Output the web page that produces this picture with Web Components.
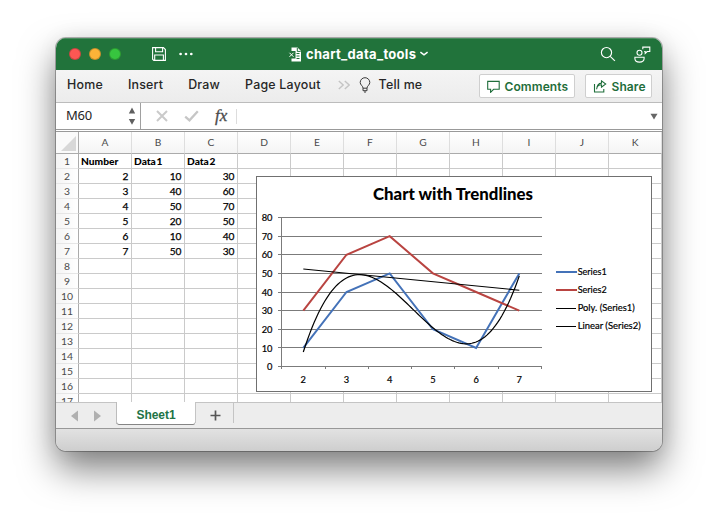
<!DOCTYPE html>
<html lang="en">
<head>
<meta charset="utf-8">
<title>chart_data_tools</title>
<style>
html,body{margin:0;width:718px;height:525px;overflow:hidden;background:#fff}
body{padding:38px 56px;box-sizing:border-box;font-family:Inter,"Liberation Sans",sans-serif}
</style>
</head>
<body>
<app-window>
  <title-bar name="chart_data_tools"></title-bar>
  <ribbon-bar></ribbon-bar>
  <formula-bar cell="M60"></formula-bar>
  <sheet-grid><trend-chart></trend-chart></sheet-grid>
  <sheet-tabs><span>Sheet1</span></sheet-tabs>
  <status-bar></status-bar>
</app-window>
<script>
const define = (name, html, setup) => customElements.define(name, class extends HTMLElement {
  constructor() {
    super();
    this.attachShadow({mode: 'open'}).innerHTML = html;
  }
  connectedCallback() { if (setup) setup(this, this.shadowRoot); }
});

define('app-window', `<style>
:host{display:flex;flex-direction:column;width:606px;height:413px;border-radius:10px;
 box-shadow:0 0 0 1px rgba(0,0,0,.27),0 18px 36px rgba(0,0,0,.5),0 0 22px rgba(0,0,0,.06)}
.in{display:flex;flex-direction:column;height:100%;border-radius:10px;overflow:hidden}
</style><div class="in"><slot></slot></div>`);

define('title-bar', `<style>
:host{display:flex;height:32px;background:#21733b;box-shadow:inset 0 1px #4b8d60;color:#fff;align-items:center;flex:none}
.lights{display:flex;gap:8px;padding-left:13px}
.lights i{width:12px;height:12px;border-radius:50%;box-sizing:border-box;border:1px solid #0003}
.tools{display:flex;gap:12px;padding-left:30px;align-items:center;width:137px}
.name{display:flex;align-items:center;font-weight:700;font-size:13px;letter-spacing:.3px}
.name svg:first-child{margin-right:4px}.name svg:last-child{margin-left:3px}
.right{display:flex;margin-left:auto;gap:18px;padding-right:11px;align-items:center}
svg{fill:none;stroke:#fff;display:block}
</style>
<div class="lights"><i style="background:#fc5753"></i><i style="background:#fdb338"></i><i style="background:#37c53f"></i></div>
<div class="tools">
<svg width="16" height="16" viewBox="0 0 16 16" stroke-width="1.1"><path d="M1.6 1.6h10.8l2 2v10.8H2.8l-1.2-1.2zM4.6 1.8v4h7v-4M3.7 14.3V9h8.7v5.3"/></svg>
<svg width="14" height="4" viewBox="0 0 14 4"><g fill="#fff" stroke="none"><circle cx="1.6" cy="2" r="1.35"/><circle cx="7" cy="2" r="1.35"/><circle cx="12.3" cy="2" r="1.35"/></g></svg>
</div>
<div class="name">
<svg width="14" height="15" viewBox="0 0 14 15"><path d="M3.5.5h6L13 4v10.5H3.5z" fill="#fff" stroke="none"/><path d="M9.3 1v3.4h3.4M8.5 6.5h3M8.5 9h3M8.5 11.5h3" stroke="#21733b" stroke-width="1"/><path d="M0 4h7.5v7.5H0z" fill="#21733b" stroke="none"/><path d="m1.5 5.8 4 4m0-4-4 4"/></svg>
<span></span>
<svg width="10" height="8" viewBox="0 0 10 8" stroke-width="1.5"><path d="M1.4 2.2 5 4.9l3.6-2.7"/></svg>
</div>
<div class="right">
<svg width="16" height="16" viewBox="0 0 16 16" stroke-width="1.15"><circle cx="6.5" cy="6.6" r="5.1"/><path d="m10.2 10.3 4.7 4.5"/></svg>
<svg width="17" height="17" viewBox="0 0 17 17" stroke-width="1.1"><circle cx="5.5" cy="6.8" r="2.5"/><path d="M.9 11.3h9.2v1.2q0 3.6-4.6 3.6T.9 12.5zM8.8 3.2V1.1h7v4.4h-2.6l-2 2V5.5h-1"/></svg>
</div>`, (el, r) => r.querySelector('.name span').textContent = el.getAttribute('name'));

define('ribbon-bar', `<style>
:host{display:flex;height:33px;box-sizing:border-box;flex:none;background:linear-gradient(#f4f4f4,#ececec);border-bottom:1px solid #bcbcbc;color:#262626;font-size:12.4px;font-weight:500;letter-spacing:.22px;align-items:flex-start;padding:7px 10.5px 0 11px}
nav{display:flex;gap:25px;line-height:16px;flex:none}
.more{padding:3px 9px 0 17px}.bulb{padding-right:8px}
svg{display:block;fill:none}
.tell{line-height:16px}
.btns{display:flex;margin-left:auto;gap:10px;margin-top:-3px}
button{font:600 12px Inter,sans-serif;letter-spacing:.1px;color:#1f6e3b;background:#fff;border:1px solid #cfcfcf;border-radius:2px;height:24px;display:flex;align-items:center;padding:0 6px 0 7px;gap:5px;width:96px;white-space:nowrap;margin:0;box-sizing:border-box}
button+button{width:67px}
button svg{flex:none}
</style><nav><span>Home</span><span>Insert</span><span>Draw</span><span>Page Layout</span></nav>
<div class="more"><svg width="12" height="10" viewBox="0 0 12 10" stroke="#c4c4c4" stroke-width="1.4"><path d="m.8 1 4.4 4L.8 9M6.8 1l4.4 4-4.4 4"/></svg></div>
<div class="bulb"><svg width="12" height="16" viewBox="0 0 12 16" stroke="#3a3a3a" stroke-width="1"><path d="M4 11.2Q4 9.7 2.5 8.3A4.7 4.7 0 0 1 1.2 5.5a4.8 4.8 0 0 1 9.6 0 4.7 4.7 0 0 1-1.3 2.8Q8 9.7 8 11.2zM4 11.2v2.5h4v-2.5M5 15h2"/></svg></div>
<span class="tell">Tell me</span>
<div class="btns"><button><svg width="13" height="13" viewBox="0 0 13 13" stroke="#1f6e3b" stroke-width="1.1"><path d="M.7 1.4h11.5v7.9H6.6l-3 3v-3H.7z"/></svg>Comments</button>
<button><svg width="14" height="13" viewBox="0 0 14 13" stroke="#1f6e3b" stroke-width="1.1"><path d="M1.5 4v8h9.3V9M3.6 9.3Q4 5 8.5 4.8V7.2L12.7 4 8.5 .9v2.2Q4 3.5 3.6 9.3z"/></svg>Share</button></div>`);

define('formula-bar', `<style>
:host{display:flex;height:29px;box-sizing:border-box;flex:none;background:#fff;border-bottom:1px solid #999;align-items:stretch}
.frame{display:flex;width:100%;border-bottom:1px solid #999;margin-bottom:1px;align-items:center}
.cell{width:85px;flex:none;height:26px;border-right:1px solid #a0a0a0;padding:0 4px 0 10px;box-sizing:border-box;display:flex;align-items:center;justify-content:space-between;color:#252525;font:13px "Noto Sans",sans-serif;letter-spacing:-.2px}
.cell span{margin-top:-2px}
svg{display:block}.x{margin-left:15px}.v{margin-left:16px}
.fx{font:italic 17px "Liberation Serif",serif;color:#4b4b4b;margin-left:16px;letter-spacing:0;width:20px;line-height:22px;-webkit-text-stroke:.3px #4b4b4b}
.line{width:1px;height:15px;background:#ddd;margin-left:1px}.end{margin-left:auto;padding-right:4px}
</style><div class="frame"><div class="cell"><span></span><svg width="8" height="18" viewBox="0 0 8 18" fill="#606060"><path d="M4 .5 7.2 6.4H.8zM4 17.7.8 12h6.4z"/></svg></div>
<svg class="x" width="12" height="12" viewBox="0 0 12 12" stroke="#cacaca" stroke-width="2"><path d="m1 1 10 10M11 1 1 11"/></svg>
<svg class="v" width="15" height="12" viewBox="0 0 15 12" fill="none" stroke="#c6c6c6" stroke-width="2.3"><path d="m1.2 6.6 4.3 3.7L13.8 1.3"/></svg>
<span class="fx">fx</span><div class="line"></div><svg class="end" width="8" height="7" viewBox="0 0 8 7" fill="#666"><path d="M.5.7h7L4 6.4z"/></svg></div>`,
 (el, r) => r.querySelector('.cell span').textContent = el.getAttribute('cell'));

define('sheet-grid', `<style>
:host{display:block;position:relative;height:270px;flex:none;overflow:hidden;background:#fff;font:10.2px Lato,sans-serif}
.grid{display:grid;grid-template-columns:23px repeat(11,53px);grid-template-rows:22px repeat(17,15px)}
.grid div{box-sizing:border-box;border-right:1px solid #cacaca;border-bottom:1px solid #cacaca;text-align:right;padding-right:2.5px;line-height:14px;white-space:nowrap;color:#000;-webkit-text-stroke:.25px #000}
.grid .col,.grid .row,.grid .corner{-webkit-text-stroke:0;color:#4a4a4a;text-align:center;padding:0}
.grid .col{line-height:21px;background:linear-gradient(#fff,#f4f4f4);border-bottom-color:#ababab;border-right-color:#dedede;font-size:10.2px}
.grid .row{background:linear-gradient(90deg,#f4f4f4,#fff);border-right-color:#ababab;border-bottom-color:#e6e6e6;font-size:10.4px}
.grid .corner{border-right-color:#ababab;border-bottom-color:#ababab;background:#fafafa}
.corner svg{display:block;margin:4px 0 0 5px}
.grid .head{font-weight:900;font-size:10.2px;text-align:left;padding-left:2px;-webkit-text-stroke:0;word-spacing:-1.7px}
slot{display:block;position:absolute;left:200px;top:44px}
</style><div class="grid"></div><slot></slot>`, (el, r) => {
  const data = [['Number','Data 1','Data 2'],[2,10,30],[3,40,60],[4,50,70],[5,20,50],[6,10,40],[7,50,30]];
  const g = r.querySelector('.grid');
  const add = (cls, text) => {
    const d = document.createElement('div');
    d.className = cls; d.textContent = text; g.append(d); return d;
  };
  add('corner', '').innerHTML = '<svg width="15" height="15"><path d="M15 0v15H0z" fill="#d8d8d8"/></svg>';
  for (const c of 'ABCDEFGHIJK') add('col', c);
  for (let i = 0; i < 17; i++) {
    add('row', i + 1);
    for (let c = 0; c < 11; c++) add(i ? 'cell' : 'head', data[i]?.[c] ?? '');
  }
});

define('trend-chart', `<style>
:host{display:block;width:396px;height:216px}
svg{display:block}text{font-family:Lato,sans-serif;fill:#000}
</style><svg width="396" height="216" viewBox="256 176 396 216"></svg>`, (el, r) => {
  const s1 = [10,40,50,20,10,50], s2 = [30,60,70,50,40,30];
  const X = i => 303.3 + i * 43.2, Y = v => 366.5 - v * 1.8625;
  const line = v => v.map((y, i) => X(i).toFixed(2) + ',' + Y(y).toFixed(2)).join(' ');
  // Least-squares cubic through Series1, t measured from the middle category.
  const cubic = i => {
    const t = i - 2.5, q = 1.5 * (t * t - 35 / 12);
    const c = 5 / 3 * (t * t * t - 101 / 20 * t);
    return 30 + 2.2857 * t - .35714 * q + 2.9444 * c;
  };
  let poly = '';
  for (let i = 0; i <= 100; i++) poly += X(i / 20).toFixed(2) + ',' + Y(cubic(i / 20)).toFixed(2) + ' ';
  let s = '<rect x="256.5" y="176.5" width="395" height="215" fill="#fff" stroke="#707070"/>';
  s += '<g stroke="#7b7b7b" shape-rendering="crispEdges">';
  for (let v = 0; v <= 80; v += 10) s += `<path d="M278 ${Math.floor(Y(v)) + .5}H541.5"/>`;
  s += '<path d="M281.5 217V369';
  for (let i = 1; i <= 6; i++) s += `M${Math.floor(281.7 + i * 43.3) + .5} 366v3`;
  s += '"/></g>';
  s += `<g fill="none"><polyline points="${line(s1)}" stroke="#4472b8" stroke-width="2"/><polyline points="${line(s2)}" stroke="#b94441" stroke-width="2"/>
  <polyline points="${poly}" stroke="#000" stroke-width="1.2"/><path d="M${X(0)} ${Y(52.38)}L${X(5)} ${Y(40.95)}" stroke="#000" stroke-width="1.1"/></g>`;
  s += '<text x="373" y="200" font-size="16" font-weight="900" textLength="160" lengthAdjust="spacingAndGlyphs">Chart with Trendlines</text>';
  s += '<g font-size="9.3" stroke="#000" stroke-width=".2">';
  for (let v = 0; v <= 80; v += 10) s += `<text x="272.5" y="${Y(v) + 3.7}" text-anchor="end">${v}</text>`;
  for (let i = 0; i < 6; i++) s += `<text x="${X(i)}" y="383" text-anchor="middle">${i + 2}</text>`;
  [['Series1',29,'#4472b8',2],['Series2',29,'#b94441',2],['Poly. (Series1)',57,'#000',1],['Linear (Series2)',63,'#000',1]].forEach(([t, w, c, k], i) => {
    const y = 272 + i * 18;
    s += `<path d="M556 ${k === 1 ? y + .5 : y}h${k === 1 ? 20 : 21}" stroke="${c}" stroke-width="${k}"/><text x="577.7" y="${y + 3}" textLength="${w}" lengthAdjust="spacingAndGlyphs">${t}</text>`;
  });
  r.querySelector('svg').innerHTML = s + '</g>';
});

define('sheet-tabs', `<style>
:host{display:flex;height:26px;flex:none;background:#ededed;align-items:stretch}
.nav{width:61px;display:flex;gap:16px;align-items:center;padding-left:15px;box-sizing:border-box;border-right:1px solid #bcbcbc}
.nav,.add,.rest{box-shadow:inset 0 1px #c4c4c4}
.tab{width:78px;background:#fff;color:#217346;font:bold 12px "Liberation Sans",sans-serif;text-align:center;line-height:26px;height:22px;border-radius:0 0 2px 2px;box-shadow:0 1px #858585;letter-spacing:-.05px}
.nav{height:22px;padding-top:5px}
.add{width:39px;display:flex;align-items:center;justify-content:center;border-left:1px solid #c4c4c4;border-right:1px solid #c4c4c4;height:21px;box-sizing:border-box;padding:5px 0 0 1px}
.rest{flex:1}
</style><div class="nav"><svg width="7" height="12"><path d="M7 .5v11L0 6z" fill="#b0b0b0"/></svg><svg width="7" height="12"><path d="M0 .5v11L7 6z" fill="#b0b0b0"/></svg></div>
<div class="tab"><slot></slot></div><div class="add"><svg width="11" height="11"><path d="M5.5.5v10M.5 5.5h10" stroke="#555" stroke-width="1.7"/></svg></div><div class="rest"></div>`);

define('status-bar', `<style>:host{display:block;flex:1;border-top:1px solid #989898;background:linear-gradient(#e2e2e2,#cecece)}</style>`);
</script>
</body>
</html>
